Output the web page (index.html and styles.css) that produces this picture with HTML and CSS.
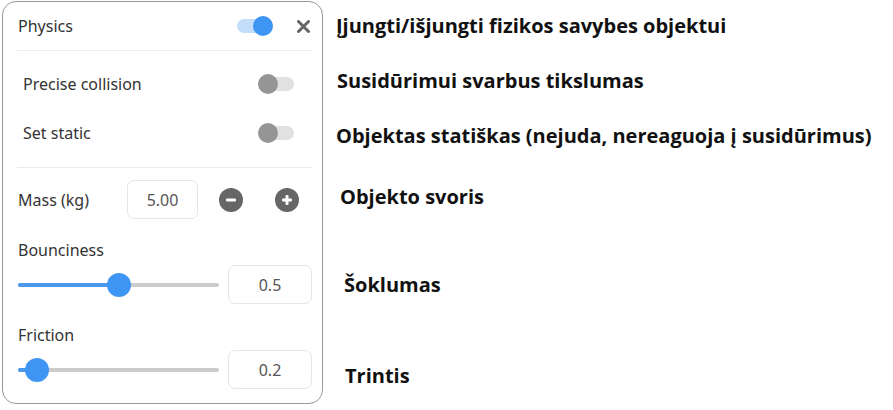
FILE: index.html
```html
<!DOCTYPE html>
<html>
<head>
<meta charset="utf-8">
<link rel="stylesheet" href="styles.css">
</head>
<body>
<div class="page">
  <div class="panel">
    <div class="header">
      <span class="title">Physics</span>
      <div class="header-tools">
        <span class="switch on"><span class="track"></span><span class="thumb"></span></span>
        <svg class="close" width="13" height="13" viewBox="0 0 13 13"><path d="M1.5 1.5 L11.5 11.5 M11.5 1.5 L1.5 11.5" stroke="#666" stroke-width="3" stroke-linecap="round"/></svg>
      </div>
    </div>
    <div class="section toggles">
      <div class="toggle-row">
        <span class="label">Precise collision</span>
        <span class="switch off"><span class="track"></span><span class="thumb"></span></span>
      </div>
      <div class="toggle-row">
        <span class="label">Set static</span>
        <span class="switch off"><span class="track"></span><span class="thumb"></span></span>
      </div>
    </div>
    <div class="section values">
      <div class="mass-row">
        <span class="label">Mass (kg)</span>
        <div class="field mass-field">5.00</div>
        <span class="round-btn"><svg width="24" height="24" viewBox="0 0 24 24"><circle cx="12" cy="12" r="12" fill="#666"/><rect x="7" y="10.5" width="10" height="3" rx="1" fill="#fff"/></svg></span>
        <span class="round-btn"><svg width="24" height="24" viewBox="0 0 24 24"><circle cx="12" cy="12" r="12" fill="#666"/><rect x="7" y="10.5" width="10" height="3" rx="1" fill="#fff"/><rect x="10.5" y="7" width="3" height="10" rx="1" fill="#fff"/></svg></span>
      </div>
      <div class="slider-group">
        <div class="label">Bounciness</div>
        <div class="slider-row">
          <div class="slider"><div class="fill" style="width:101px"></div><div class="knob" style="left:101px"></div></div>
          <div class="field value-field">0.5</div>
        </div>
      </div>
      <div class="slider-group">
        <div class="label">Friction</div>
        <div class="slider-row">
          <div class="slider"><div class="fill" style="width:19px"></div><div class="knob" style="left:19px"></div></div>
          <div class="field value-field">0.2</div>
        </div>
      </div>
    </div>
  </div>
  <div class="notes">
    <div class="note n1">Įjungti/išjungti fizikos savybes objektui</div>
    <div class="note n2">Susidūrimui svarbus tikslumas</div>
    <div class="note n3">Objektas statiškas (nejuda, nereaguoja į susidūrimus)</div>
    <div class="note n4">Objekto svoris</div>
    <div class="note n5">Šoklumas</div>
    <div class="note n6">Trintis</div>
  </div>
</div>
</body>
</html>
```

FILE: styles.css
```css
html, body {
  margin: 0;
  padding: 0;
  background: #fff;
}
body {
  font-family: "Noto Sans", "Open Sans", sans-serif;
  color: #333;
}
.page {
  display: flex;
  align-items: flex-start;
  padding: 1px 0 0 2px;
}
.panel {
  box-sizing: border-box;
  width: 321px;
  height: 403px;
  border: 1px solid #999;
  border-radius: 14px;
  padding: 0 10px 0 14px;
  display: flex;
  flex-direction: column;
  flex-shrink: 0;
}
.header {
  height: 48px;
  display: flex;
  align-items: center;
  justify-content: space-between;
  border-bottom: 1px solid #eaeaea;
  padding: 0 0 0 1px;
}
.title {
  font-size: 16px;
  color: #333;
}
.header-tools {
  display: flex;
  align-items: center;
  gap: 26px;
  padding-right: 2px;
}
.switch {
  position: relative;
  width: 34px;
  height: 20px;
  display: inline-block;
  flex-shrink: 0;
}
.switch .track {
  position: absolute;
  left: 0;
  top: 3px;
  width: 34px;
  height: 14px;
  border-radius: 7px;
}
.switch .thumb {
  position: absolute;
  top: 0;
  width: 20px;
  height: 20px;
  border-radius: 50%;
}
.switch.on .track { background: #c4ddfa; }
.switch.on .thumb { background: #3f95f4; left: 16px; }
.switch.off .track { background: #e1e1e1; left: 2px; }
.switch.off .thumb { background: #959595; left: 0; }
.close { display: block; }
.section {
  display: flex;
  flex-direction: column;
}
.toggles {
  padding: 13px 20px 14px 6px;
  gap: 9px;
  border-bottom: 1px solid #eaeaea;
}
.toggle-row {
  height: 40px;
  display: flex;
  align-items: center;
  justify-content: space-between;
}
.label {
  font-size: 16px;
  color: #333;
}
.values {
  padding: 12px 0 0 1px;
}
.mass-row {
  height: 39px;
  display: flex;
  align-items: center;
}
.mass-row .label {
  width: 109px;
  flex-shrink: 0;
}
.field {
  box-sizing: border-box;
  border: 1px solid #e6e6e6;
  border-radius: 7px;
  display: flex;
  align-items: center;
  justify-content: center;
  font-size: 16px;
  color: #555;
  height: 39px;
  flex-shrink: 0;
}
.mass-field {
  width: 71px;
  margin-right: 21px;
}
.round-btn {
  width: 24px;
  height: 24px;
  display: block;
  flex-shrink: 0;
}
.round-btn + .round-btn { margin-left: 32px; }
.round-btn svg { display: block; }
.slider-group {
  margin-top: 21px;
  display: flex;
  flex-direction: column;
}
.slider-group .label {
  height: 20px;
  line-height: 20px;
}
.slider-row {
  margin-top: 5px;
  height: 39px;
  display: flex;
  align-items: center;
  gap: 9px;
}
.slider {
  position: relative;
  width: 201px;
  height: 4px;
  border-radius: 2px;
  background: #cccccc;
  flex-shrink: 0;
}
.slider .fill {
  position: absolute;
  left: 0;
  top: 0;
  height: 4px;
  border-radius: 2px;
  background: #4a99ec;
}
.slider .knob {
  position: absolute;
  top: -10px;
  width: 24px;
  height: 24px;
  margin-left: -12px;
  border-radius: 50%;
  background: #3f95f4;
}
.value-field {
  width: 84px;
}
.notes {
  display: flex;
  flex-direction: column;
  padding-top: 13px;
  margin-left: 13px;
  font-family: "Open Sans", "Noto Sans", sans-serif;
  font-weight: 700;
  font-size: 20px;
  color: #111;
}
.note {
  height: 24px;
  line-height: 24px;
  white-space: nowrap;
}
.n2 { margin-top: 31px; margin-left: 1px; }
.n3 { margin-top: 31px; }
.n4 { margin-top: 37px; margin-left: 4px; }
.n5 { margin-top: 64px; margin-left: 8px; }
.n6 { margin-top: 67px; margin-left: 9px; }
```
